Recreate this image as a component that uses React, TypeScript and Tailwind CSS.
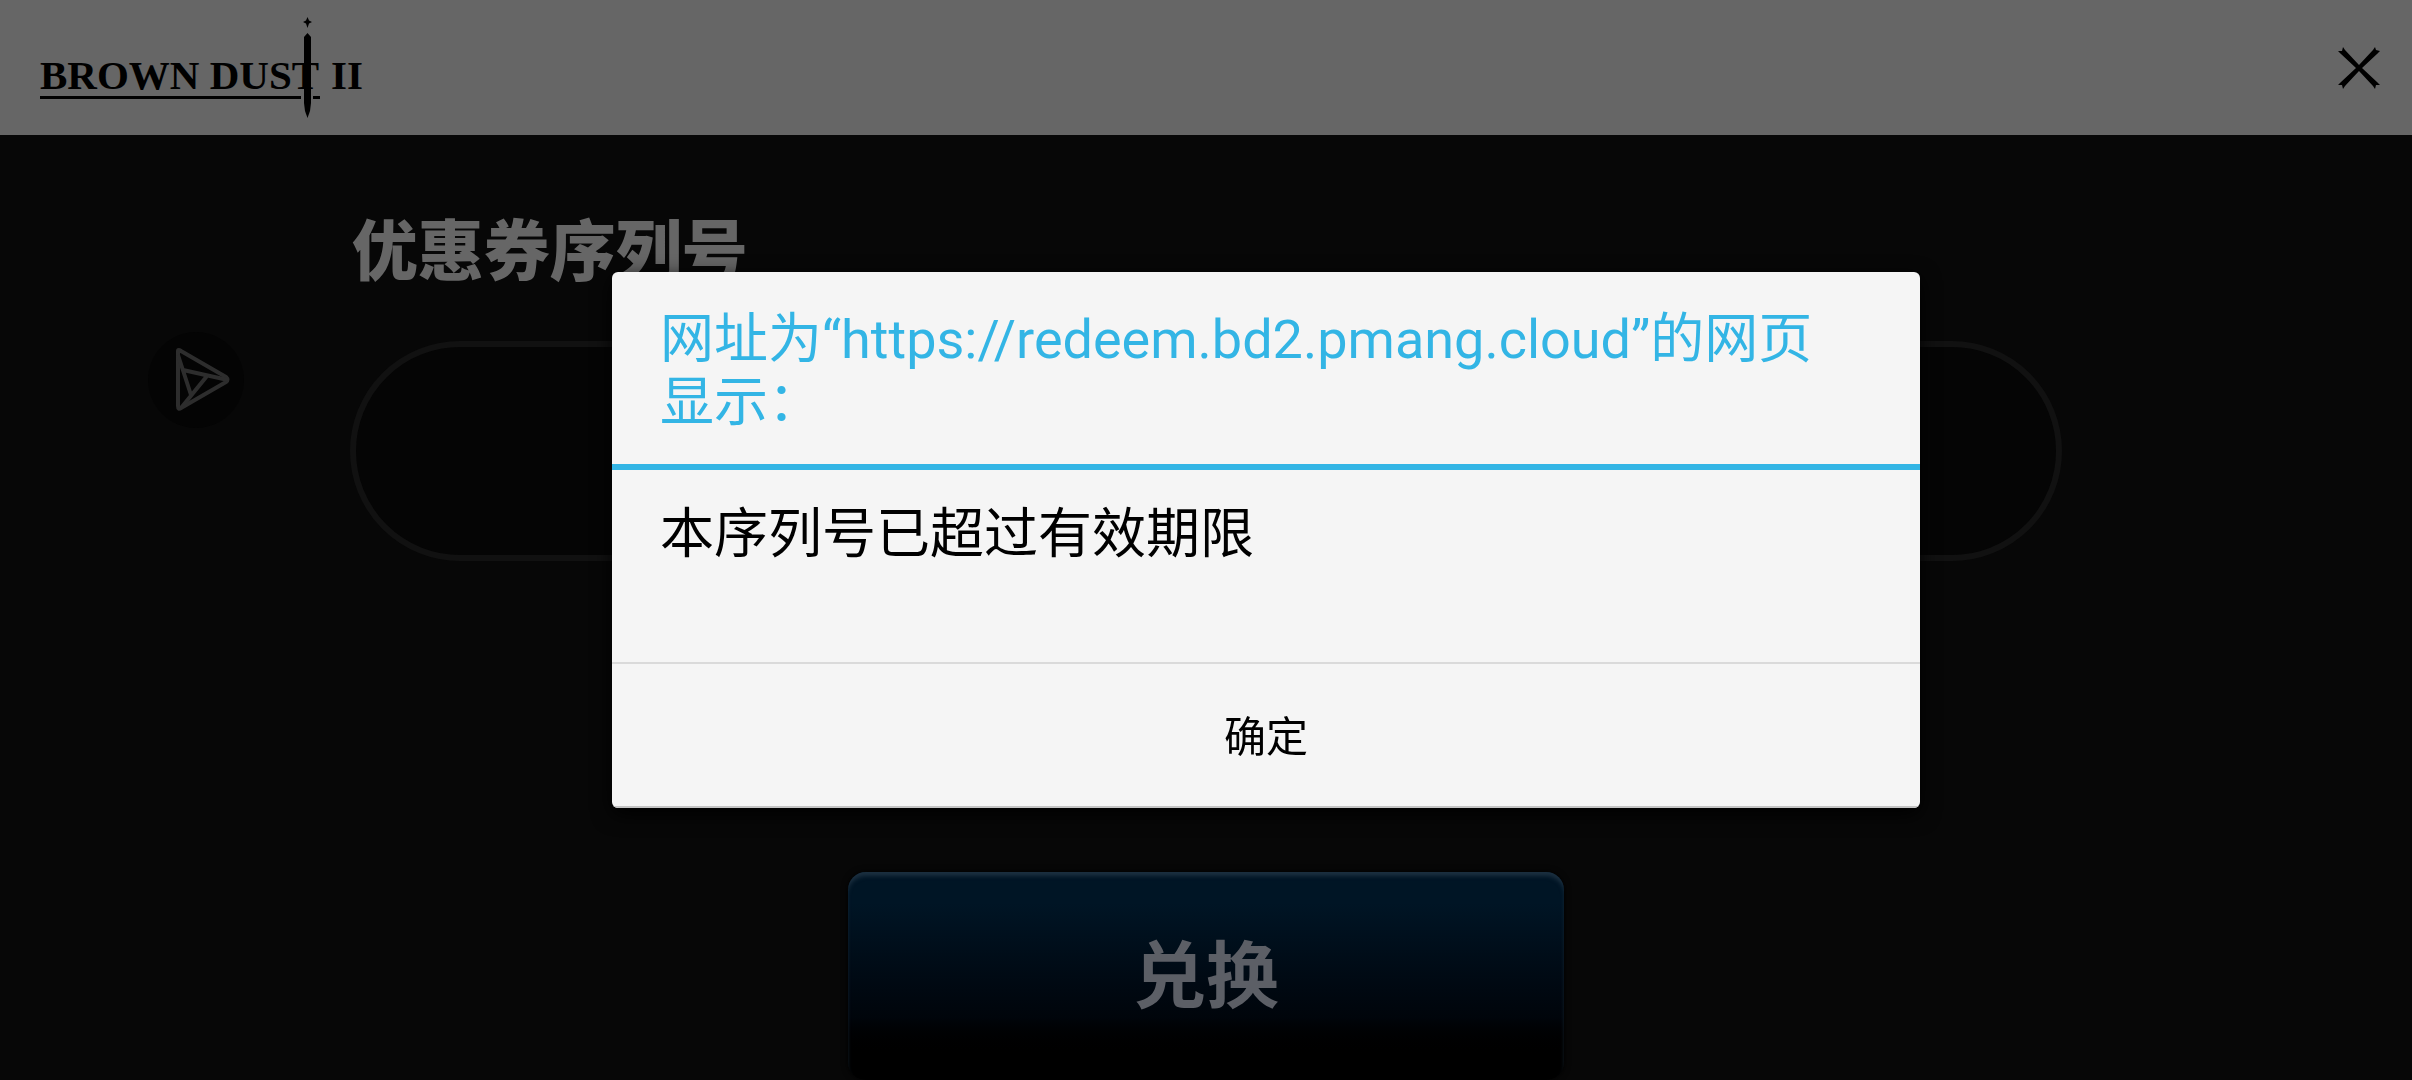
function BrandLogo() {
  return (
    <a href="#" aria-label="Brown Dust II" className="relative block h-[102px] w-[326px] text-black">
      <span className="flex gap-3 whitespace-nowrap pt-8 font-['Liberation_Serif',serif] text-[41px] font-bold leading-[52px]">
        <span>BROWN DUST</span>
        <span>II</span>
      </span>
      <svg className="absolute inset-0" width="326" height="102" viewBox="0 0 326 102" fill="currentColor" aria-hidden="true">
        <path d="M267.500 0 269 3.500 272 5 269 6.500 267.500 11 266 6.500 263 5 266 3.500Z" />
        <path d="M264 20 267.500 16 271 20V86l-1 8-2.500 7-2.500-7-1-8Z" />
        <path d="M0 79h261v3H0ZM273 79h7v3h-7Z" />
      </svg>
    </a>
  );
}

function Header() {
  return (
    <header className="flex h-[135px] items-center justify-between bg-[#666666] pl-10 pr-8">
      <BrandLogo />
      <button type="button" aria-label="关闭" className="text-black">
        <svg width="42" height="42" viewBox="0 0 42 42" fill="currentColor" aria-hidden="true">
          <path d="M5 0 7 3 21 18 35 3 37 0 38 3 42 4 39 7 24 21 39 35 42 38 38 38 37 42 35 39 21 24 7 39 5 42 4 38 0 38 3 35 18 21 3 7 0 4 4 4Z" />
        </svg>
      </button>
    </header>
  );
}

function FloatingButton() {
  return (
    <button
      type="button"
      aria-label="悬浮菜单"
      className="absolute left-[148px] top-[332px] size-24 rounded-full bg-[#040404]"
    >
      <svg width="96" height="96" viewBox="0 0 96 96" fill="none" stroke="#2d2d2d" strokeWidth="4" strokeLinejoin="round" aria-hidden="true">
        <path d="M30 19Q30 17 33 19L78 45Q81 48 78 50L33 76Q30 78 30 74Z" />
        <path d="M30 23 43 63M35 38 80 48M59 44 33 76" />
      </svg>
    </button>
  );
}

function CouponForm() {
  return (
    <form className="mx-auto flex w-[71%] flex-col pt-[70px]">
      <label htmlFor="coupon" className="pl-0.5 text-[66px] font-black leading-[96px] text-[#666666]">
        优惠券序列号
      </label>
      <input
        id="coupon"
        type="text"
        className="mt-[40px] h-[220px] w-full rounded-full border-[6px] border-[#111111] bg-[#050505] px-24 text-center text-[66px] text-[#666666] outline-none"
      />
      <button
        type="button"
        className="mt-[311px] h-[208px] w-[716px] self-center rounded-[18px] bg-linear-to-b from-[#001525] from-15% via-[#00050b] via-70% to-black to-90% pt-1 text-[73px] font-bold text-[#5c5f66] shadow-[inset_0_5px_4px_-1px_#1c3040,0_0_6px_#000000]"
      >
        兑换
      </button>
    </form>
  );
}

function AlertDialog() {
  return (
    <div className="fixed inset-0 flex items-center justify-center pl-[120px]">
      <section
        role="alertdialog"
        aria-modal="true"
        aria-labelledby="alert-title"
        aria-describedby="alert-message"
        className="w-full max-w-[1308px] overflow-hidden rounded-[6px] bg-[#f5f5f5] shadow-[0_6px_20px_#000000]"
      >
        <h2
          id="alert-title"
          className="border-b-[6px] border-[#33b5e5] pb-[30px] pl-12 pr-24 pt-[36px] text-[54px] font-normal leading-[63px] text-[#33b5e5]"
        >
          网址为“https://redeem.bd2.pmang.cloud”的网页显示：
        </h2>
        <p id="alert-message" className="px-12 pb-[96px] pt-[33px] text-[54px] leading-[63px] text-black">
          本序列号已超过有效期限
        </p>
        <button
          type="button"
          className="h-[146px] w-full border-t-2 border-[#dadada] pt-0.5 text-[42px] text-black shadow-[inset_0_-2px_0_#c4c4c4]"
        >
          确定
        </button>
      </section>
    </div>
  );
}

export default function App() {
  return (
    <div className="relative h-screen overflow-hidden bg-[#070707] font-[Roboto,'Noto_Sans_CJK_SC',sans-serif]" lang="zh-CN">
      <Header />
      <main>
        <CouponForm />
      </main>
      <FloatingButton />
      <AlertDialog />
    </div>
  );
}
